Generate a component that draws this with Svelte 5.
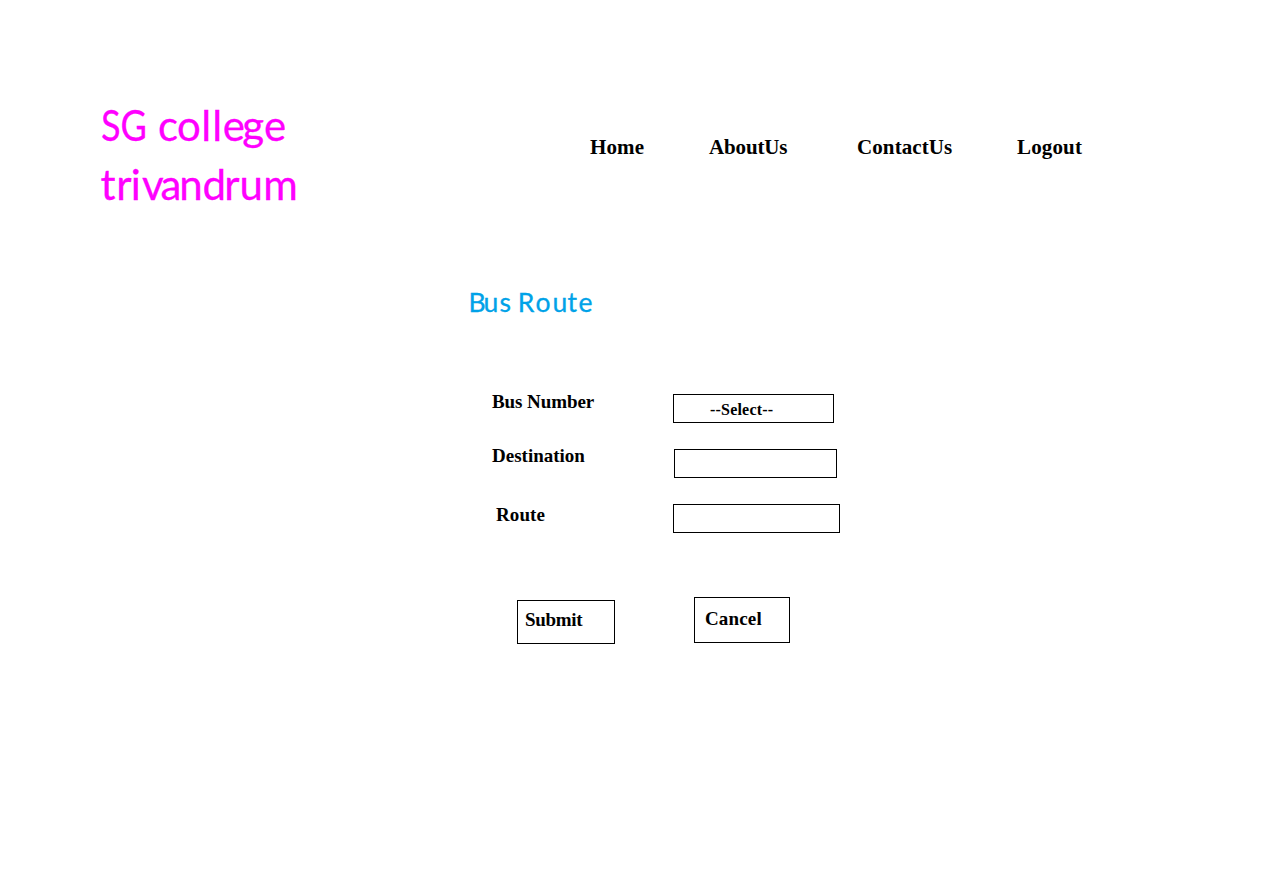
<script>
  const links = [
    { label: 'Home', width: 119, spacing: 0.1 },
    { label: 'AboutUs', width: 148, spacing: -0.15 },
    { label: 'ContactUs', width: 160, spacing: 0.1 },
    { label: 'Logout', width: 80, spacing: 0.15 }
  ];
</script>

<div class="page">
  <header>
    <svg class="brand" width="220" height="120" viewBox="90 95 220 120" role="img" aria-label="SG college trivandrum">
      <text x="101" y="141" textLength="46" lengthAdjust="spacingAndGlyphs">SG</text>
      <text x="158 177 201.3 212.3 222.8 242.3 264" y="141">college</text>
      <text x="100.5 116.3 130.7 142 160.5 179.3 202.5 224.2 239.5 263.3" y="200">trivandrum</text>
    </svg>
    <nav>
      {#each links as link}
        <span class="slot" style="width: {link.width}px; letter-spacing: {link.spacing}px">{link.label}</span>
      {/each}
    </nav>
  </header>

  <main>
    <svg class="title" width="140" height="40" viewBox="460 285 140 40" role="img" aria-label="Bus Route">
      <text x="468.5 483.5 499.5" y="312">Bus</text>
      <text x="517.8 535.6 552.6 567.6 578.4" y="312">Route</text>
    </svg>

    <div class="form">
      <div class="row number">
        <span class="label">Bus Number</span>
        <div class="field select">--Select--</div>
      </div>
      <div class="row destination">
        <span class="label">Destination</span>
        <div class="field"></div>
      </div>
      <div class="row route">
        <span class="label">Route</span>
        <div class="field"></div>
      </div>
    </div>

    <div class="actions">
      <div class="button submit">Submit</div>
      <div class="button cancel">Cancel</div>
    </div>
  </main>
</div>

<style>
  :global(body) {
    margin: 0;
    background: #fff;
  }
  .page {
    box-sizing: border-box;
    width: 1279px;
    height: 894px;
    padding-top: 95px;
    overflow: hidden;
    background: #fff;
    color: #000;
    font-family: 'Liberation Serif', serif;
    font-weight: 700;
  }
  header {
    display: flex;
    height: 190px;
    padding-left: 90px;
  }
  .brand,
  .title {
    display: block;
    flex: none;
  }
  .brand text {
    font: 400 42px Lato, sans-serif;
    fill: #ff00ff;
    stroke: #ff00ff;
    stroke-width: 0.3px;
  }
  nav {
    display: flex;
    margin: 40px 0 0 280px;
    font-size: 21px;
    line-height: 24px;
  }
  .slot {
    flex: none;
  }
  main {
    padding-left: 460px;
  }
  .title text {
    font: 400 26.5px Lato, sans-serif;
    fill: #00a2e8;
    stroke: #00a2e8;
    stroke-width: 0.3px;
  }
  .form {
    display: grid;
    grid-template-rows: 55px 55px 29px;
    margin: 69px 0 0 32px;
  }
  .row {
    display: grid;
    grid-template-columns: 181px auto;
    justify-content: start;
    align-items: start;
  }
  .label {
    font-size: 19px;
    line-height: 22px;
  }
  .field {
    box-sizing: border-box;
    width: 161px;
    height: 29px;
    border: 1px solid #000;
  }
  .number .label {
    margin-top: -3px;
    letter-spacing: -0.08px;
  }
  .destination .label {
    margin-top: -4px;
  }
  .destination .field {
    width: 163px;
    margin-left: 1px;
  }
  .route .label {
    padding-left: 4px;
    letter-spacing: 0.1px;
  }
  .route .field {
    width: 167px;
  }
  .select {
    padding: 5px 0 0 36px;
    font-size: 16px;
    line-height: 20px;
    letter-spacing: 0.2px;
  }
  .actions {
    display: flex;
    align-items: flex-start;
    gap: 79px;
    margin: 64px 0 0 57px;
  }
  .button {
    box-sizing: border-box;
    border: 1px solid #000;
    font-size: 19px;
    line-height: 22px;
  }
  .submit {
    width: 98px;
    height: 44px;
    margin-top: 3px;
    padding: 8px 0 0 7px;
    letter-spacing: -0.3px;
  }
  .cancel {
    width: 96px;
    height: 46px;
    padding: 10px 0 0 10px;
    letter-spacing: 0.15px;
  }
</style>
